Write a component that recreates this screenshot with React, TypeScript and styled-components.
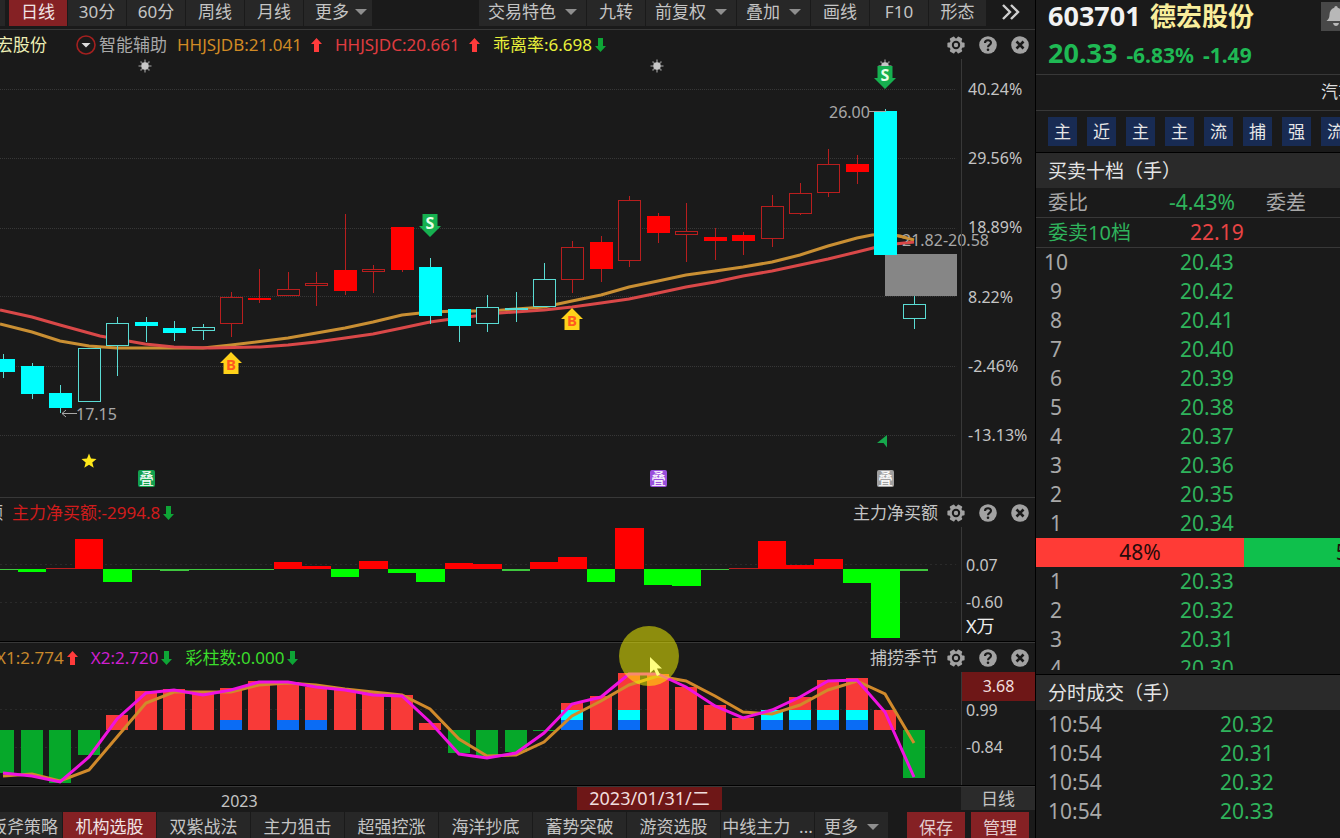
import React from "react";
import styled, { createGlobalStyle } from "styled-components";

const c = {
  bg: "#1a1a1a",
  raised: "#272727",
  line: "#383838",
  grid: "#323232",
  text: "#c4c4c4",
  muted: "#a8a8a8",
  brand: "#852124",
  marker: "#6e1717",
  up: "#ff0000",
  upLine: "#b81e1e",
  down: "#00ffff",
  downLine: "#5adcd4",
  green: "#2fb35c",
  orange: "#c98f33",
  red: "#d94848",
};

const Global = createGlobalStyle`
  *, *::before, *::after { box-sizing: border-box; }
  body {
    margin: 0;
    background: ${c.bg};
    color: ${c.text};
    font: 17px/24px "Noto Sans", "Noto Sans CJK SC", sans-serif;
    overflow: hidden;
  }
  button { font: inherit; border: 0; padding: 0; margin: 0; background: none; color: inherit; white-space: pre; cursor: pointer; }
  a { color: inherit; text-decoration: none; }
  svg { display: block; }
`;

/* ---------- layout ---------- */

const Shell = styled.div`
  display: flex;
  height: 100vh;
`;

const Main = styled.main`
  flex: 1;
  min-width: 0;
  display: flex;
  flex-direction: column;
  overflow: hidden;
`;

const Toolbar = styled.nav`
  display: flex;
  align-items: flex-start;
  height: 30px;
  flex: none;
  border-bottom: 1px solid ${c.line};
`;

const ToolStub = styled.span`
  width: 5px;
  height: 26px;
  margin-right: 4px;
  background: ${c.raised};
`;

const ToolButton = styled.button<{ $w: number; $active?: boolean; $push?: boolean }>`
  display: flex;
  align-items: center;
  justify-content: center;
  gap: 9px;
  width: ${(p) => p.$w}px;
  height: 26px;
  padding-bottom: 2px;
  margin-left: ${(p) => (p.$push ? "auto" : "0")};
  background: ${(p) => (p.$active ? c.brand : c.raised)};
  border-right: 1px solid ${c.bg};
  color: ${(p) => (p.$active ? "#f0e4e4" : c.text)};
`;

const MorePeriods = styled(ToolButton)`
  justify-content: flex-end;
  gap: 6px;
  padding-right: 5px;
`;

const MoreTools = styled.button`
  display: flex;
  justify-content: center;
  width: 48px;
  height: 26px;
  padding-top: 4px;
`;

const Caret = styled.span`
  border: 6px solid transparent;
  border-top-color: #8e8e8e;
  border-bottom: 0;
`;

const Panel = styled.section<{ $grow?: boolean; $top?: boolean; $bottom: string }>`
  position: relative;
  display: flex;
  flex-direction: column;
  flex: ${(p) => (p.$grow ? "1 0 auto" : "none")};
  border-top: ${(p) => (p.$top ? `1px solid ${c.line}` : "0")};
  border-bottom: 1px solid ${(p) => p.$bottom};
`;

const PanelHead = styled.header`
  display: flex;
  align-items: center;
  justify-content: space-between;
  height: 29px;
  padding-right: 6px;
`;

const Readings = styled.div<{ $cut: number; $gap?: number }>`
  display: flex;
  align-items: center;
  gap: ${(p) => p.$gap ?? 13}px;
  margin-left: -${(p) => p.$cut}px;
  white-space: nowrap;
`;

const Reading = styled.span<{ $color: string; $min?: number }>`
  display: flex;
  align-items: center;
  justify-content: space-between;
  gap: 3px;
  min-width: ${(p) => p.$min ?? 0}px;
  color: ${(p) => p.$color};
`;

const Assist = styled.button`
  display: flex;
  align-items: center;
  gap: 3px;
  margin: 0 -3px 0 16px;
  color: ${c.muted};
`;

const Actions = styled.div`
  display: flex;
  align-items: center;
  gap: 14px;
`;

const ActionTitle = styled.span`
  margin-right: -5px;
`;

const PanelBody = styled.div<{ $h: number }>`
  display: flex;
  flex: 1 0 auto;
  height: ${(p) => p.$h}px;
`;

const Plot = styled.svg`
  flex: 1;
  min-width: 0;
  height: 100%;
  overflow: visible;
  font-size: 16px;
`;

const Axis = styled.div<{ $pad: number; $left: number }>`
  display: flex;
  flex-direction: column;
  gap: 19px;
  width: 74px;
  flex: none;
  padding: ${(p) => p.$pad}px 0 0 ${(p) => p.$left}px;
  border-left: 1px solid ${c.line};
  font-size: 16px;
  line-height: 18px;
  white-space: nowrap;
`;

const PriceTicks = styled.div`
  display: flex;
  flex-direction: column;
  justify-content: space-between;
  height: 364px;
`;

const AxisUnit = styled.span`
  margin-top: -13px;
  font-size: 18px;
  color: #eee;
`;

const AxisMarker = styled.strong`
  height: 29px;
  margin: 0 0 -19px -4px;
  background: ${c.marker};
  color: #f0dede;
  font-weight: 400;
  line-height: 29px;
  text-align: center;
`;

const Pointer = styled.svg`
  position: absolute;
  left: 619px;
  top: -17px;
  pointer-events: none;
`;

const TimeAxis = styled.div`
  position: relative;
  display: flex;
  flex: none;
  justify-content: space-between;
  height: 24px;
  padding-left: 221px;
  border-top: 1px solid ${c.line};
  line-height: 23px;
  font-size: 16px;
`;

const DateMarker = styled.strong`
  position: absolute;
  left: 577px;
  top: 0;
  width: 145px;
  background: ${c.marker};
  color: #f0dede;
  font-size: 18px;
  font-weight: 400;
  text-align: center;
`;

const YearMark = styled.span`
  padding-top: 3px;
`;

const Period = styled.span`
  width: 74px;
  background: #2b2b2b;
  font-size: 17px;
  text-align: center;
`;

const Strategies = styled.nav`
  display: flex;
  flex: none;
  height: 28px;
  padding-top: 2px;
  padding-right: 6px;
`;

const StrategyTab = styled.button<{ $active?: boolean; $first?: boolean; $w?: number }>`
  display: flex;
  align-items: center;
  justify-content: center;
  gap: 9px;
  flex: none;
  width: ${(p) => p.$w ?? 94}px;
  height: 26px;
  padding-top: 4px;
  margin-left: ${(p) => (p.$first ? "-31px" : "0")};
  background: ${(p) => (p.$active ? c.brand : c.raised)};
  border-right: 1px solid ${c.bg};
  color: ${(p) => (p.$active ? "#f0e4e4" : c.text)};
`;

const StrategyActions = styled.div`
  display: flex;
  gap: 6px;
  margin-left: auto;
`;

const SolidButton = styled.button`
  width: 58px;
  height: 26px;
  padding-top: 4px;
  background: ${c.brand};
  color: #e2cccc;
`;

/* ---------- quote side bar ---------- */

const Side = styled.aside`
  flex: 0 0 305px;
  overflow: hidden;
  border-left: 1px solid #000;
`;

const SideInner = styled.div`
  display: flex;
  flex-direction: column;
  width: 433px;
  height: 100%;
  font-size: 21px;
`;

const Quote = styled.header`
  height: 75px;
  padding-left: 12px;
  border-bottom: 1px solid ${c.line};
  font-weight: 700;
`;

const QuoteTitle = styled.h1`
  display: grid;
  grid-template-columns: 102px 171px 29px;
  align-items: center;
  height: 32px;
  margin: 0;
  color: #f2f2f2;
  font-size: 27px;
`;

const StockName = styled.span`
  color: #f9ee9c;
  font-size: 26px;
`;

const BellButton = styled.button`
  display: grid;
  place-items: center;
  width: 29px;
  height: 29px;
  background: #484848;
`;

const QuotePrice = styled.p`
  display: flex;
  align-items: baseline;
  gap: 9px;
  margin: 0;
  color: #1fb954;
  line-height: 42px;
`;

const LastPrice = styled.span`
  font-size: 27px;
`;

const Industry = styled.a`
  height: 36px;
  padding-left: 285px;
  border-bottom: 1px solid ${c.line};
  color: #ddd;
  font-size: 17px;
  line-height: 33px;
`;

const Tags = styled.div`
  display: flex;
  gap: 10px;
  height: 42px;
  padding: 6px 12px;
  border-bottom: 1px solid #000;
`;

const Tag = styled.button`
  width: 29px;
  height: 29px;
  background: #182b53;
  color: #e6e6e6;
  font-size: 17px;
`;

const SectionTitle = styled.h2`
  flex: none;
  height: 35px;
  margin: 0;
  padding-left: 12px;
  background: #2a2a2a;
  color: #e4e4e4;
  font-size: 19px;
  font-weight: 400;
  line-height: 37px;
`;

const Summary = styled.div<{ $value: number }>`
  display: grid;
  grid-template-columns: ${(p) => p.$value}px 97px 1fr;
  flex: none;
  height: 30px;
  padding: 0 0 0 12px;
  border-bottom: 1px solid ${c.line};
  line-height: 29px;
`;

const Label = styled.span<{ $color?: string }>`
  color: ${(p) => p.$color ?? c.muted};
  font-size: 20px;
`;

const Value = styled.span<{ $color: string }>`
  color: ${(p) => p.$color};
`;

const Book = styled.div`
  flex: 1 1 0;
  min-height: 0;
  overflow: hidden;
`;

const Grid = styled.table`
  width: 100%;
  border-collapse: collapse;
  table-layout: fixed;
  line-height: 28px;
`;

const Level = styled.th`
  width: 40px;
  height: 29px;
  padding: 0 0 1px;
  color: ${c.muted};
  font-weight: 400;
  text-align: center;
`;

const Time = styled.th`
  width: 184px;
  height: 29px;
  padding: 0 0 1px 12px;
  color: ${c.muted};
  font-weight: 400;
  text-align: left;
`;

const Price = styled.td<{ $indent?: number }>`
  height: 29px;
  padding: 0 0 1px ${(p) => p.$indent ?? 0}px;
  color: ${c.green};
`;

const Ratio = styled.div`
  display: flex;
  height: 29px;
  color: #260b0b;
  line-height: 29px;
  text-align: center;
`;

const RatioPart = styled.span<{ $share: number; $color: string }>`
  flex: ${(p) => p.$share};
  background: ${(p) => p.$color};
`;

const Trades = styled.section`
  flex: none;
  margin-top: 4px;
  padding-bottom: 12px;
  border-top: 1px solid #000;
`;

/* ---------- icons ---------- */

const Arrow = ({ up }: { up?: boolean }) => (
  <svg width="11" height="14" viewBox="0 0 11 14" aria-hidden>
    <path
      d="M5.5 0 L11 6 H8 V14 H3 V6 H0 Z"
      fill={up ? "#ff3b3b" : "#0ea536"}
      transform={up ? undefined : "rotate(180 5.5 7)"}
    />
  </svg>
);

const GearIcon = () => (
  <svg width="18" height="18" viewBox="0 0 18 18" aria-hidden>
    <g fill="#a2a2a2">
      <circle cx="9" cy="9" r="6.8" />
      {[0, 60, 120].map((a) => (
        <rect key={a} x="0.4" y="6.4" width="17.2" height="5.2" rx="1" transform={`rotate(${a} 9 9)`} />
      ))}
    </g>
    <circle cx="9" cy="9" r="3.2" fill="none" stroke={c.bg} strokeWidth="2" />
  </svg>
);

const HelpIcon = () => (
  <svg width="18" height="18" viewBox="0 0 18 18" aria-hidden>
    <circle cx="9" cy="9" r="8.8" fill="#a2a2a2" />
    <path d="M6 6.9 C6 3.4 12 3.4 12 6.7 C12 8.8 9 8.9 9 11.2" fill="none" stroke={c.bg} strokeWidth="2.1" />
    <circle cx="9" cy="13.8" r="1.3" fill={c.bg} />
  </svg>
);

const CloseIcon = () => (
  <svg width="18" height="18" viewBox="0 0 18 18" aria-hidden>
    <circle cx="9" cy="9" r="8.8" fill="#a2a2a2" />
    <path d="M5.5 5.5 L12.5 12.5 M12.5 5.5 L5.5 12.5" stroke={c.bg} strokeWidth="2.6" />
  </svg>
);

const BellIcon = () => (
  <svg width="22" height="22" viewBox="0 0 22 22" aria-hidden>
    <path d="M11 1 C12 1 12.6 1.8 12.7 2.7 C16 3.6 17.4 6.4 17.5 10 C17.6 13 18.6 14.4 20.5 16 H1.5 C3.4 14.4 4.4 13 4.5 10 C4.6 6.4 6 3.6 9.3 2.7 C9.4 1.8 10 1 11 1 Z" fill="#b8b8b8" />
    <path d="M8 18 H14 C13.6 20 12.4 21 11 21 C9.6 21 8.4 20 8 18 Z" fill="#b8b8b8" />
  </svg>
);

const PanelActions = ({ title }: { title?: string }) => (
  <Actions>
    {title && <ActionTitle>{title}</ActionTitle>}
    <button aria-label="设置"><GearIcon /></button>
    <button aria-label="帮助"><HelpIcon /></button>
    <button aria-label="关闭"><CloseIcon /></button>
  </Actions>
);

/* ---------- chart data ---------- */

const STEP = 28.45;
const cx = (i: number) => Math.round(3.4 + i * STEP);
const slot = (i: number) => Math.round(-10.6 + i * STEP);

type Candle = ["u" | "U" | "d" | "D", number, number, number, number];

// kind (capital = filled), body top, body bottom, wick top, wick bottom
const candles: Candle[] = [
  ["D", 359, 372, 354, 378], ["D", 366, 394, 363, 399], ["D", 393, 408, 385, 413],
  ["d", 348, 402, 348, 402], ["d", 323, 346, 317, 376], ["D", 322, 326, 317, 342],
  ["D", 328, 333, 321, 341], ["d", 327, 331, 324, 340], ["u", 297, 324, 292, 337],
  ["U", 298, 300, 269, 303], ["u", 289, 296, 272, 296], ["u", 283, 286, 272, 306],
  ["U", 270, 291, 214, 295], ["u", 269, 272, 265, 293], ["U", 227, 270, 227, 272],
  ["D", 267, 316, 258, 324], ["D", 309, 326, 309, 342], ["d", 307, 324, 295, 332],
  ["d", 308, 310, 292, 322], ["d", 279, 307, 263, 307], ["u", 247, 280, 241, 293],
  ["U", 242, 269, 236, 282], ["u", 200, 261, 196, 267], ["U", 216, 233, 213, 243],
  ["u", 231, 235, 203, 262], ["U", 237, 241, 228, 260], ["U", 235, 241, 232, 255],
  ["u", 206, 239, 195, 247], ["u", 193, 214, 183, 215], ["u", 164, 193, 149, 197],
  ["U", 164, 172, 155, 184], ["D", 111, 255, 109, 255], ["d", 304, 319, 296, 329],
];

const fastLine =
  "0,324 32,332 60,341 89,346 117,348 160,348 203,348 231,345 288,338 345,328 373,322 402,315 430,312 459,311 490,311 516,309 544,307 572,301 601,295 629,287 658,281 686,275 715,271 743,267 772,262 800,255 828,246 857,238 872,235 886,234 900,236 914,240";
const slowLine =
  "0,310 32,317 60,325 100,336 145,344 174,347 210,348 260,347 288,345 316,342 345,338 373,334 402,328 430,322 459,318 500,313 544,310 572,307 601,303 629,299 658,293 686,287 715,282 743,276 772,271 800,265 828,259 857,252 885,245 914,242";

const flows = [
  570, 572, 568, 539, 582, 570, 571, 570, 570, 570, 562, 566, 577, 561, 573, 582, 563,
  564, 571, 562, 557, 582, 528, 585, 586, 570, 568, 541, 565, 559, 583, 638, 571,
];

const season = [
  773, 775, 783, 755, 715, 691, 689, 693, 688, 681, 682, 687, 689, 693, 695, 723, 753,
  756, 752, 731, 703, 696, 673, 674, 687, 705, 718, 710, 697, 680, 678, 710, 778,
];
const blueBars = [8, 10, 11, 20, 22, 27, 28, 29, 30];
const cyanBars = [20, 22, 27, 28, 29, 30];
const x1Line = [
  776, 774, 781, 770, 737, 703, 692, 692, 692, 685, 683, 685, 689, 692, 695, 709, 739,
  756, 755, 742, 716, 701, 685, 676, 681, 696, 712, 714, 705, 690, 681, 694, 743,
];
const x2Line = [
  773, 776, 782, 757, 719, 693, 690, 695, 690, 682, 682, 687, 690, 695, 696, 722, 754,
  758, 753, 733, 704, 697, 674, 674, 687, 706, 718, 710, 697, 681, 680, 712, 777,
];
const toPoints = (ys: number[]) => ys.map((y, i) => `${cx(i)},${y}`).join(" ");

const GridLine = ({ y, faint }: { y: number; faint?: boolean }) => (
  <line x1="0" x2="99.5%" y1={y + 0.5} y2={y + 0.5} stroke={faint ? "#2a2a2a" : "#373737"} strokeDasharray={faint ? "2 3" : "1 1"} />
);

const CandleMark = ({ i, data }: { i: number; data: Candle }) => {
  const [kind, top, bottom, high, low] = data;
  const x = cx(i);
  const rise = kind.toLowerCase() === "u";
  const filled = kind === "U" || kind === "D";
  const stroke = rise ? c.upLine : c.downLine;
  return (
    <g stroke={stroke}>
      <path d={`M${x + 0.5} ${high} V${top} M${x + 0.5} ${bottom} V${low}`} />
      {filled ? (
        <rect x={x - 11} y={top} width="23" height={bottom - top} fill={rise ? c.up : c.down} stroke="none" />
      ) : (
        <rect x={x - 10.5} y={top + 0.5} width="22" height={Math.max(1, bottom - top - 1)} fill={c.bg} />
      )}
    </g>
  );
};

const Sun = ({ x, y }: { x: number; y: number }) => (
  <g transform={`translate(${x} ${y})`}>
    <path d="M0 -6.5 V6.5 M-6.5 0 H6.5 M-4.5 -4.5 L4.5 4.5 M4.5 -4.5 L-4.5 4.5" stroke="#7c7c7c" strokeWidth="1.6" />
    <circle r="3.7" fill="#c8c8c8" />
  </g>
);

const BuyMark = ({ x, y }: { x: number; y: number }) => (
  <g transform={`translate(${x} ${y})`}>
    <path d="M0 0 L11 11 H7.5 V22 H-7.5 V11 H-11 Z" fill="#ffd21a" />
    <text y="17.5" textAnchor="middle" fontSize="15" fontWeight="700" fill="#ff5a1f">B</text>
  </g>
);

const SellMark = ({ x, y }: { x: number; y: number }) => (
  <g transform={`translate(${x} ${y})`}>
    <path d="M0 23 L11 12 H7.5 V0 H-7.5 V12 H-11 Z" fill="#16b050" />
    <text y="15" textAnchor="middle" fontSize="16" fontWeight="700" fill="#e8ffe8">S</text>
  </g>
);

const StackMark = ({ x, color }: { x: number; color: string }) => (
  <g>
    <rect x={x} y="470" width="17" height="17" rx="2" fill={color} />
    <text x={x + 8.5} y="484" textAnchor="middle" fontSize="15" fill="#fff">叠</text>
  </g>
);

const PriceChart = () => (
  <Plot role="img" aria-label="日线K线图">
    <g transform="translate(0 -59)">
      {[89, 158, 228, 296, 366, 435].map((y) => <GridLine key={y} y={y} />)}
      <polyline points={fastLine} fill="none" stroke={c.orange} strokeWidth="3" />
      <polyline points={slowLine} fill="none" stroke={c.red} strokeWidth="3" />
      <rect x="885" y="254" width="72" height="42" fill="#868686" />
      {candles.map((d, i) => <CandleMark key={i} i={i} data={d} />)}
      <path d="M869 111.5 H886" stroke={c.muted} />
      <path d="M77 413.5 H62 M66 410 L62 413.5 L66 417" fill="none" stroke={c.muted} />
      <g fill={c.muted}>
        <text x="829" y="118">26.00</text>
        <text x="76" y="420">17.15</text>
        <text x="902" y="246">21.82-20.58</text>
      </g>
      <path d="M897 236 L914 240" stroke={c.orange} strokeWidth="2" />
      <path d="M897 244 L914 242" stroke={c.red} strokeWidth="2" />
      <Sun x={145} y={66} />
      <Sun x={657} y={66} />
      <Sun x={885} y={66} />
      <SellMark x={885} y={66} />
      <SellMark x={430} y={214} />
      <BuyMark x={231} y={352} />
      <BuyMark x={572} y={308} />
      <path d="M89 453.5 L91 458.5 L96.5 459 L92.3 462.4 L93.7 467.7 L89 464.8 L84.3 467.7 L85.7 462.4 L81.5 459 L87 458.5 Z" fill="#ffe81a" />
      <path d="M877 443 L887 435 V447.5 L883.5 443 Z" fill="#16a84c" />
      <StackMark x={138} color="#12a04e" />
      <StackMark x={650} color="#9a4fdc" />
      <StackMark x={877} color="#a0a0a0" />
    </g>
  </Plot>
);

const FlowChart = () => (
  <Plot role="img" aria-label="主力净买额柱状图">
    <g transform="translate(0 -527)">
      <GridLine y={564} faint />
      <GridLine y={602} faint />
      {flows.map((y, i) => {
        const width = slot(i + 1) - slot(i);
        const thin = Math.abs(y - 569) < 3;
        return y < 569 ? (
          <rect key={i} x={slot(i)} y={y} width={width} height={569 - y} fill={thin ? "#b81e1e" : "#ff0000"} />
        ) : (
          <rect key={i} x={slot(i)} y="569" width={width} height={y - 569} fill={thin ? "#3fc83f" : "#00ff00"} />
        );
      })}
    </g>
  </Plot>
);

const SeasonChart = () => (
  <Plot role="img" aria-label="捕捞季节指标图">
    <g transform="translate(0 -672)">
      <GridLine y={709} faint />
      <GridLine y={747} faint />
      {season.map((y, i) => (
        <rect key={i} x={cx(i) - 11} y={Math.min(y, 730)} width="22" height={Math.abs(y - 730)} fill={y < 730 ? "#f83a38" : "#06a82a"} />
      ))}
      {blueBars.map((i) => <rect key={i} x={cx(i) - 11} y="720" width="22" height="10" fill="#0a6cf5" />)}
      {cyanBars.map((i) => <rect key={i} x={cx(i) - 11} y="710" width="22" height="10" fill="#00ffff" />)}
      <polyline points={toPoints(x1Line)} fill="none" stroke="#d18a2b" strokeWidth="3" />
      <polyline points={toPoints(x2Line)} fill="none" stroke="#f012e0" strokeWidth="3" />
    </g>
  </Plot>
);

/* ---------- content ---------- */

const periods = ["日线", "30分", "60分", "周线", "月线"];
const tools: [string, number, boolean][] = [
  ["交易特色", 108, true], ["九转", 59, false], ["前复权", 91, true], ["叠加", 74, true],
  ["画线", 59, false], ["F10", 59, false], ["形态", 58, false],
];
const strategies = ["三板斧策略", "机构选股", "双紫战法", "主力狙击", "超强控涨", "海洋抄底", "蓄势突破", "游资选股", "中线主力  ..."];
const priceTicks = ["40.24%", "29.56%", "18.89%", "8.22%", "-2.46%", "-13.13%"];
const tags = ["主", "近", "主", "主", "流", "捕", "强", "流"];
const asks = ["20.43", "20.42", "20.41", "20.40", "20.39", "20.38", "20.37", "20.36", "20.35", "20.34"];
const bids = ["20.33", "20.32", "20.31", "20.30"];
const trades = ["20.32", "20.31", "20.32", "20.33"];

const Ladder = ({ rows }: { rows: [number, string][] }) => (
  <Grid>
    <tbody>
      {rows.map(([level, price]) => (
        <tr key={level}>
          <Level scope="row">{level}</Level>
          <Price $indent={104}>{price}</Price>
        </tr>
      ))}
    </tbody>
  </Grid>
);

export default function App() {
  return (
    <Shell>
      <Global />
      <Main>
        <Toolbar>
          <ToolStub />
          {periods.map((p, i) => (
            <ToolButton key={p} $w={59} $active={i === 0}>{p}</ToolButton>
          ))}
          <MorePeriods $w={69}>更多<Caret /></MorePeriods>
          {tools.map(([label, w, menu], i) => (
            <ToolButton key={label} $w={w} $push={i === 0}>
              {label}
              {menu && <Caret />}
            </ToolButton>
          ))}
          <MoreTools aria-label="展开">
            <svg width="18" height="16" viewBox="0 0 18 16" aria-hidden>
              <path d="M1 1 L8 8 L1 15 M9 1 L16 8 L9 15" fill="none" stroke="#cfcfcf" strokeWidth="2.4" />
            </svg>
          </MoreTools>
        </Toolbar>

        <Panel $grow $bottom={c.line}>
          <PanelHead>
            <Readings $cut={21}>
              <Reading $color="#eeeeb4">德宏股份</Reading>
              <Assist>
                <svg width="20" height="20" viewBox="0 0 20 20" aria-hidden>
                  <circle cx="10" cy="10" r="9" fill="none" stroke="#a3201f" strokeWidth="1.6" />
                  <path d="M5.5 8 H14.5 L10 12.5 Z" fill="#dcdcdc" />
                </svg>
                智能辅助
              </Assist>
              <Reading $color="#d08a24" $min={145}>HHJSJDB:21.041<Arrow up /></Reading>
              <Reading $color="#e03c40" $min={145}>HHJSJDC:20.661<Arrow up /></Reading>
              <Reading $color="#e8f03a">乖离率:6.698<Arrow /></Reading>
            </Readings>
            <PanelActions />
          </PanelHead>
          <PanelBody $h={438}>
            <PriceChart />
            <Axis $pad={21} $left={6}>
              <PriceTicks>
                {priceTicks.map((t) => <span key={t}>{t}</span>)}
              </PriceTicks>
            </Axis>
          </PanelBody>
        </Panel>

        <Panel $bottom="#000">
          <PanelHead>
            <Readings $cut={82} $gap={9}>
              <Reading $color={c.text}>主力净买额</Reading>
              <Reading $color="#d01c1c">主力净买额:-2994.8<Arrow /></Reading>
            </Readings>
            <PanelActions title="主力净买额" />
          </PanelHead>
          <PanelBody $h={114}>
            <FlowChart />
            <Axis $pad={29} $left={4}>
              <span>0.07</span>
              <span>-0.60</span>
              <AxisUnit>X万</AxisUnit>
            </Axis>
          </PanelBody>
        </Panel>

        <Panel $top $bottom="#000">
          <PanelHead>
            <Readings $cut={4}>
              <Reading $color="#c8882c">X1:2.774<Arrow up /></Reading>
              <Reading $color="#cf1fd0">X2:2.720<Arrow /></Reading>
              <Reading $color="#3bdc2c">彩柱数:0.000<Arrow /></Reading>
            </Readings>
            <PanelActions title="捕捞季节" />
          </PanelHead>
          <PanelBody $h={113}>
            <SeasonChart />
            <Axis $pad={0} $left={4}>
              <AxisMarker>3.68</AxisMarker>
              <span>0.99</span>
              <span>-0.84</span>
            </Axis>
          </PanelBody>
          <Pointer width="60" height="60" viewBox="0 0 60 60" aria-hidden>
            <path d="M31 31 V47 L35 43.5 L38 50 L41 48.5 L38 42.5 H43 Z" fill="#fff" />
            <circle cx="30" cy="30" r="30" fill="#ffff00" fillOpacity="0.5" />
          </Pointer>
        </Panel>

        <TimeAxis>
          <YearMark>2023</YearMark>
          <DateMarker>2023/01/31/二</DateMarker>
          <Period>日线</Period>
        </TimeAxis>

        <Strategies>
          {strategies.map((s, i) => (
            <StrategyTab key={s} $first={i === 0} $active={i === 1}>{s}</StrategyTab>
          ))}
          <StrategyTab $w={74}>更多<Caret /></StrategyTab>
          <StrategyActions>
            <SolidButton>保存</SolidButton>
            <SolidButton>管理</SolidButton>
          </StrategyActions>
        </Strategies>
      </Main>

      <Side>
        <SideInner>
          <Quote>
            <QuoteTitle>
              <span>603701</span>
              <StockName>德宏股份</StockName>
              <BellButton aria-label="预警"><BellIcon /></BellButton>
            </QuoteTitle>
            <QuotePrice>
              <LastPrice>20.33</LastPrice>
              <span>-6.83%</span>
              <span>-1.49</span>
            </QuotePrice>
          </Quote>
          <Industry href="#industry">汽车零部件</Industry>
          <Tags>
            {tags.map((t, i) => <Tag key={i}>{t}</Tag>)}
          </Tags>
          <SectionTitle>买卖十档（手）</SectionTitle>
          <Summary $value={121}>
            <Label>委比</Label>
            <Value $color={c.green}>-4.43%</Value>
            <Label>委差</Label>
          </Summary>
          <Summary $value={142}>
            <Label $color={c.green}>委卖10档</Label>
            <Value $color="#e84444">22.19</Value>
          </Summary>
          <Book>
            <Ladder rows={asks.map((p, i) => [10 - i, p])} />
            <Ratio>
              <RatioPart $share={48} $color="#ff3b36">48%</RatioPart>
              <RatioPart $share={52} $color="#0fc04c">52%</RatioPart>
            </Ratio>
            <Ladder rows={bids.map((p, i) => [i + 1, p])} />
          </Book>
          <Trades>
            <SectionTitle>分时成交（手）</SectionTitle>
            <Grid>
              <tbody>
                {trades.map((p, i) => (
                  <tr key={i}>
                    <Time scope="row">10:54</Time>
                    <Price>{p}</Price>
                  </tr>
                ))}
              </tbody>
            </Grid>
          </Trades>
        </SideInner>
      </Side>
    </Shell>
  );
}
